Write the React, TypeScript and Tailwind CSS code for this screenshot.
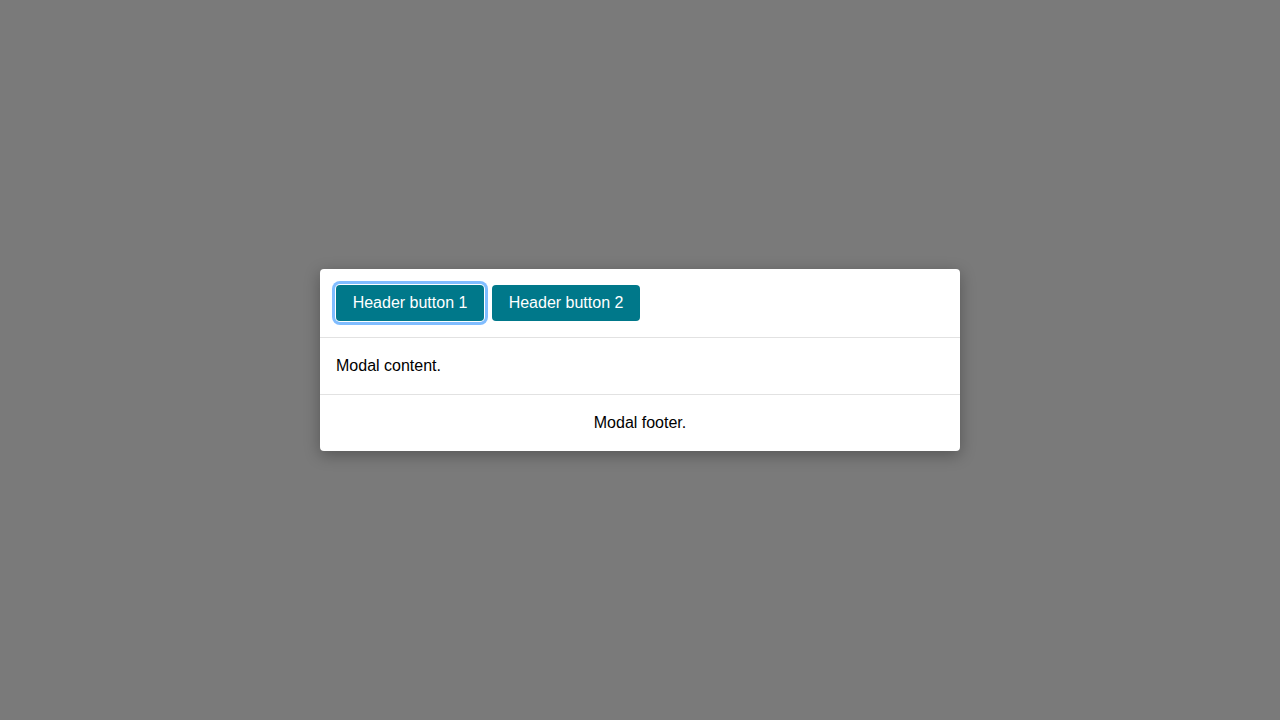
import React from "react";

const App: React.FC = () => {
  return (
    <div
      className="min-h-screen w-full bg-[#7a7a7a] flex items-center justify-center"
      style={{ fontFamily: '"Liberation Sans", Arial, sans-serif' }}
    >
      <div className="w-[640px] bg-white rounded shadow-[0_4px_16px_rgba(0,0,0,0.3)] text-base text-black">
        <div className="flex items-center gap-2 p-4 border-b border-[#e2e2e2]">
          <button
            type="button"
            className="h-9 w-[148px] rounded bg-[#00788a] text-white text-base ring-3 ring-[#80bdff] ring-offset-1 ring-offset-white"
          >
            Header button 1
          </button>
          <button
            type="button"
            className="h-9 w-[148px] rounded bg-[#00788a] text-white text-base"
          >
            Header button 2
          </button>
        </div>
        <div className="px-4 py-[17px] leading-[22px] border-b border-[#e2e2e2]">
          Modal content.
        </div>
        <div className="px-4 py-[17px] leading-[22px] text-center">
          Modal footer.
        </div>
      </div>
    </div>
  );
};

export default App;
